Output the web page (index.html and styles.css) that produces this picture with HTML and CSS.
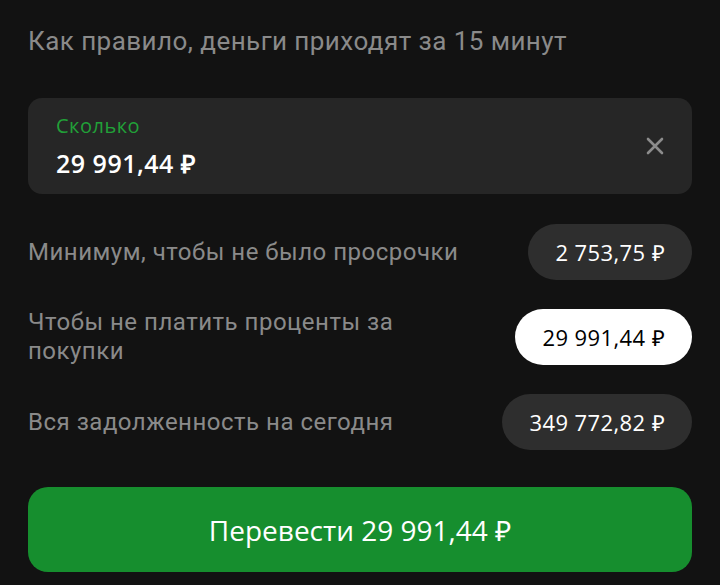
FILE: index.html
```html
<!DOCTYPE html>
<html lang="ru">
<head>
    <meta charset="UTF-8">
    <meta name="viewport" content="width=device-width, initial-scale=1.0">
    <title>Перевод</title>
    <link rel="stylesheet" href="styles.css">
</head>
<body>

    <div class="screen">
        <p class="hint">Как правило, деньги приходят за 15 минут</p>

        <!-- Поле суммы -->
        <div class="amount-field">
            <div class="amount-text">
                <span class="amount-label">Сколько</span>
                <span class="amount-value">29 991,44 ₽</span>
            </div>
            <button class="clear-btn" aria-label="Очистить">
                <svg width="20" height="20" viewBox="0 0 20 20">
                    <path d="M3 3 L17 17 M17 3 L3 17" stroke="#8c8c8c" stroke-width="2.6" stroke-linecap="round" fill="none"/>
                </svg>
            </button>
        </div>

        <!-- Варианты суммы -->
        <div class="options">
            <div class="option">
                <span class="option-text">Минимум, чтобы не было просрочки</span>
                <span class="pill">2 753,75 ₽</span>
            </div>
            <div class="option">
                <span class="option-text">Чтобы не платить проценты за покупки</span>
                <span class="pill selected">29 991,44 ₽</span>
            </div>
            <div class="option">
                <span class="option-text">Вся задолженность на сегодня</span>
                <span class="pill">349 772,82 ₽</span>
            </div>
        </div>

        <button class="send-btn">Перевести 29 991,44 ₽</button>
    </div>

</body>
</html>
```

FILE: styles.css
```css
body {
    margin: 0;
    padding: 0;
    background: #121212;
    font-family: Roboto, "Noto Sans", sans-serif;
}

.screen {
    padding: 24px 28px 0 28px;
}

.hint {
    margin: 0;
    color: #8a8a8a;
    font-size: 26px;
    letter-spacing: 0.45px;
    line-height: 34px;
}

/* Поле суммы */
.amount-field {
    margin-top: 40px;
    height: 96px;
    background: #262626;
    border-radius: 14px;
    display: flex;
    align-items: center;
    justify-content: space-between;
    padding: 0 28px;
}

.amount-text {
    display: flex;
    flex-direction: column;
    padding-top: 4px;
}

.amount-label {
    color: #21a038;
    font-family: "Open Sans", sans-serif;
    font-size: 20px;
    letter-spacing: 0.5px;
    line-height: 28px;
}

.amount-value {
    margin-top: 2px;
    color: #fff;
    font-family: "Open Sans", sans-serif;
    font-weight: 600;
    font-size: 25px;
    letter-spacing: 0.5px;
    line-height: 42px;
}

.clear-btn {
    background: none;
    border: none;
    padding: 0;
    width: 20px;
    height: 20px;
    margin-right: -1px;
    cursor: pointer;
}

/* Варианты суммы */
.options {
    margin-top: 30px;
    display: flex;
    flex-direction: column;
    gap: 28px;
}

.option {
    display: flex;
    align-items: center;
    justify-content: space-between;
    gap: 24px;
}

.option-text {
    color: #8a8a8a;
    font-size: 24px;
    letter-spacing: 0.5px;
    line-height: 29px;
    max-width: 440px;
}

.pill {
    flex-shrink: 0;
    height: 56px;
    padding: 0 27px;
    border-radius: 28px;
    background: #2e2e2e;
    color: #fff;
    font-family: "Open Sans", sans-serif;
    font-weight: 500;
    font-size: 22px;
    letter-spacing: 0.4px;
    display: flex;
    align-items: center;
}

.pill.selected {
    background: #fff;
    color: #000;
}

.send-btn {
    margin-top: 37px;
    width: 100%;
    height: 85px;
    border: none;
    border-radius: 20px;
    background: #168e2e;
    color: #fff;
    font-family: "Open Sans", sans-serif;
    font-weight: 500;
    font-size: 28px;
    cursor: pointer;
}
```
